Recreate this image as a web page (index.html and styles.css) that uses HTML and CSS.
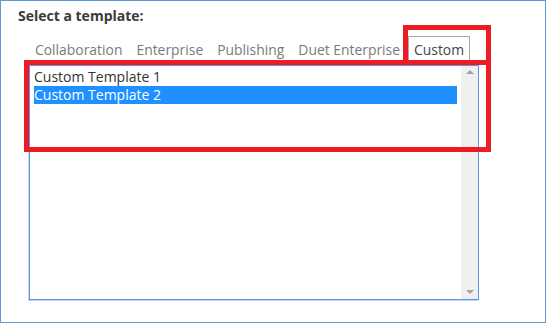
FILE: index.html
```html
<!DOCTYPE html>
<html lang="en">
  <head>
    <meta charset="UTF-8" />
    <meta name="viewport" content="width=device-width, initial-scale=1.0" />
    <title>Select a template</title>
    <link rel="stylesheet" href="styles.css">
  </head>

  <body>
    <div class="frame">
      <h1 class="title">Select a template:</h1>

      <ul class="tabs">
        <li class="tab">Collaboration</li>
        <li class="tab">Enterprise</li>
        <li class="tab">Publishing</li>
        <li class="tab">Duet Enterprise</li>
        <li class="tab active">Custom</li>
      </ul>

      <div class="listbox">
        <ul class="items">
          <li class="item">Custom Template 1</li>
          <li class="item selected">Custom Template 2</li>
        </ul>
        <div class="scrollbar">
          <span class="arrow up"></span>
          <span class="arrow down"></span>
        </div>
      </div>

      <!-- 标注框 -->
      <div class="mark mark-list"></div>
      <div class="mark mark-tab"></div>
    </div>
  </body>
</html>
```

FILE: styles.css
```css
* {
  margin: 0;
  padding: 0;
  box-sizing: border-box;
}

body {
  font-family: "Open Sans", "Noto Sans", sans-serif;
  background-color: white;
}

.frame {
  position: relative;
  width: 546px;
  height: 323px;
  border: 1px solid #5b9bd5;
  padding: 6px 0 0 28px;
}

.title {
  font-size: 14px;
  line-height: 18px;
  font-weight: bold;
  color: #3a3a3a;
  margin-left: -11px;
}

.tabs {
  list-style: none;
  display: flex;
  gap: 2px;
  margin-top: 11px;
}

.tab {
  font-size: 13.9px;
  line-height: 20px;
  color: #7a7a7a;
  padding: 3px 5px 5px;
  border: 1px solid transparent;
  border-bottom: none;
}

.tab.active {
  color: #444;
  border-color: #a8a8a8;
}

.listbox {
  display: flex;
  width: 450px;
  height: 235px;
  border: 1px solid #5b95e0;
  box-shadow: -1px 1px 0 #c2d7f2;
}

.items {
  list-style: none;
  flex: 1;
  padding: 2px 4px;
}

.item {
  font-size: 14px;
  line-height: 18px;
  color: #333;
}

.item.selected {
  background-color: #1e90ff;
  color: white;
}

.scrollbar {
  width: 17px;
  background-color: #f0f0f0;
  display: flex;
  flex-direction: column;
  justify-content: space-between;
  align-items: center;
  padding: 4px 0 5px;
}

.arrow {
  width: 0;
  height: 0;
  border-left: 4px solid transparent;
  border-right: 4px solid transparent;
}

.arrow.up {
  border-bottom: 4px solid #a3a3a3;
}

.arrow.down {
  border-top: 4px solid #a3a3a3;
}

/* 红色标注 */
.mark {
  position: absolute;
  border: 5px solid #ed1c24;
}

.mark-list {
  left: 23px;
  top: 59px;
  width: 467px;
  height: 92px;
}

.mark-tab {
  left: 402px;
  top: 24px;
  width: 88px;
  height: 40px;
}
```
